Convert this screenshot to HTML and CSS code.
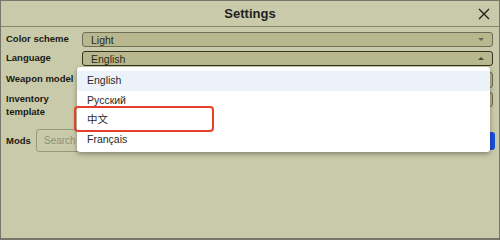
FILE: index.html
```html
<!DOCTYPE html>
<html lang="en">
<head>
    <meta charset="UTF-8">
    <meta name="viewport" content="width=device-width, initial-scale=1.0">
    <title>Settings</title>
    <link rel="stylesheet" href="styles.css">
</head>
<body>
<div class="window">
    <div class="titlebar">
        <span class="title">Settings</span>
        <svg class="close" width="12" height="12" viewBox="0 0 12 12">
            <path d="M1 1 L11 11 M11 1 L1 11" stroke="#222" stroke-width="1.4" fill="none"/>
        </svg>
    </div>
    <div class="content">
        <div class="row row_color">
            <div class="label">Color scheme</div>
            <div class="select">
                <span>Light</span>
                <span class="arrow down"></span>
            </div>
        </div>
        <div class="row row_lang">
            <div class="label">Language</div>
            <div class="select focused">
                <span>English</span>
                <span class="arrow up"></span>
                <div class="dropdown">
                    <div class="option active">English</div>
                    <div class="option">Русский</div>
                    <div class="option">中文</div>
                    <div class="option">Français</div>
                    <div class="marker"></div>
                </div>
            </div>
        </div>
        <div class="row row_weapon">
            <div class="label">Weapon model</div>
            <div class="select"></div>
        </div>
        <div class="row row_inv">
            <div class="label">Inventory<br>template</div>
            <div class="select"></div>
        </div>
        <div class="mods">
            <div class="label">Mods</div>
            <div class="search">Search</div>
            <div class="btn"></div>
        </div>
    </div>
</div>
</body>
</html>
```

FILE: styles.css
```css
* {
    box-sizing: border-box;
}
body {
    margin: 0;
    font-family: "Liberation Sans", Arial, sans-serif;
    color: #222;
}
.window {
    width: 500px;
    height: 240px;
    background: #c9caa9;
    border: 1px solid #76766a;
    border-bottom-width: 2px;
}
.titlebar {
    height: 26px;
    border-bottom: 1px solid #85856c;
    display: flex;
    align-items: center;
    justify-content: center;
    position: relative;
}
.title {
    font-size: 13px;
    font-weight: bold;
}
.close {
    position: absolute;
    right: 9px;
    top: 7px;
}
.content {
    padding: 5px 6px 0 5px;
}
.row {
    display: grid;
    grid-template-columns: 76px 1fr;
    align-items: start;
}
.label {
    font-size: 9.5px;
    font-weight: bold;
    line-height: 13px;
    padding-top: 0;
    color: #1a1a14;
}
.select {
    height: 15px;
    background: #b8b78e;
    border: 1px solid #6e6d55;
    border-radius: 3px;
    display: flex;
    align-items: center;
    justify-content: space-between;
    padding: 0 8px 0 8px;
    font-size: 10.5px;
    color: #2b2b22;
    position: relative;
}
.select.focused {
    border: 1.5px solid #34331f;
}
.arrow {
    width: 0;
    height: 0;
    border-left: 3px solid transparent;
    border-right: 3px solid transparent;
}
.arrow.down {
    border-top: 3px solid #6a6a58;
}
.arrow.up {
    border-bottom: 3px solid #4a4a38;
}
.row_lang {
    margin-top: 4px;
}
.row_weapon {
    margin-top: 6px;
}
.row_weapon .select {
    height: 16px;
}
.row_inv {
    margin-top: 4px;
}
.mods {
    display: flex;
    align-items: center;
    margin-top: 11px;
}
.mods .label {
    width: 30px;
}
.search {
    flex: 1;
    height: 23px;
    border: 1px solid #98987e;
    border-radius: 3px;
    font-size: 10px;
    color: #8f8f80;
    display: flex;
    align-items: center;
    padding-left: 7px;
}
.btn {
    width: 50px;
    height: 18px;
    background: #1c4fd8;
    border-radius: 3px;
    margin-left: 6px;
    margin-right: -2px;
}
.dropdown {
    position: absolute;
    left: -6px;
    top: 15px;
    width: 413px;
    background: #fff;
    border-radius: 3px;
    box-shadow: 0 2px 5px rgba(0, 0, 0, 0.35);
    padding: 4px 0 3px;
    z-index: 2;
}
.option {
    height: 19.5px;
    line-height: 19.5px;
    padding-left: 10px;
    font-size: 10.5px;
    color: #2a2a2a;
    font-family: "Liberation Sans", "Noto Sans CJK SC", sans-serif;
}
.option.active {
    background: #ecf2fa;
}
.marker {
    position: absolute;
    left: -3px;
    top: 39px;
    width: 140px;
    height: 26px;
    border: 2px solid #e6402b;
    border-radius: 4px;
}
```
